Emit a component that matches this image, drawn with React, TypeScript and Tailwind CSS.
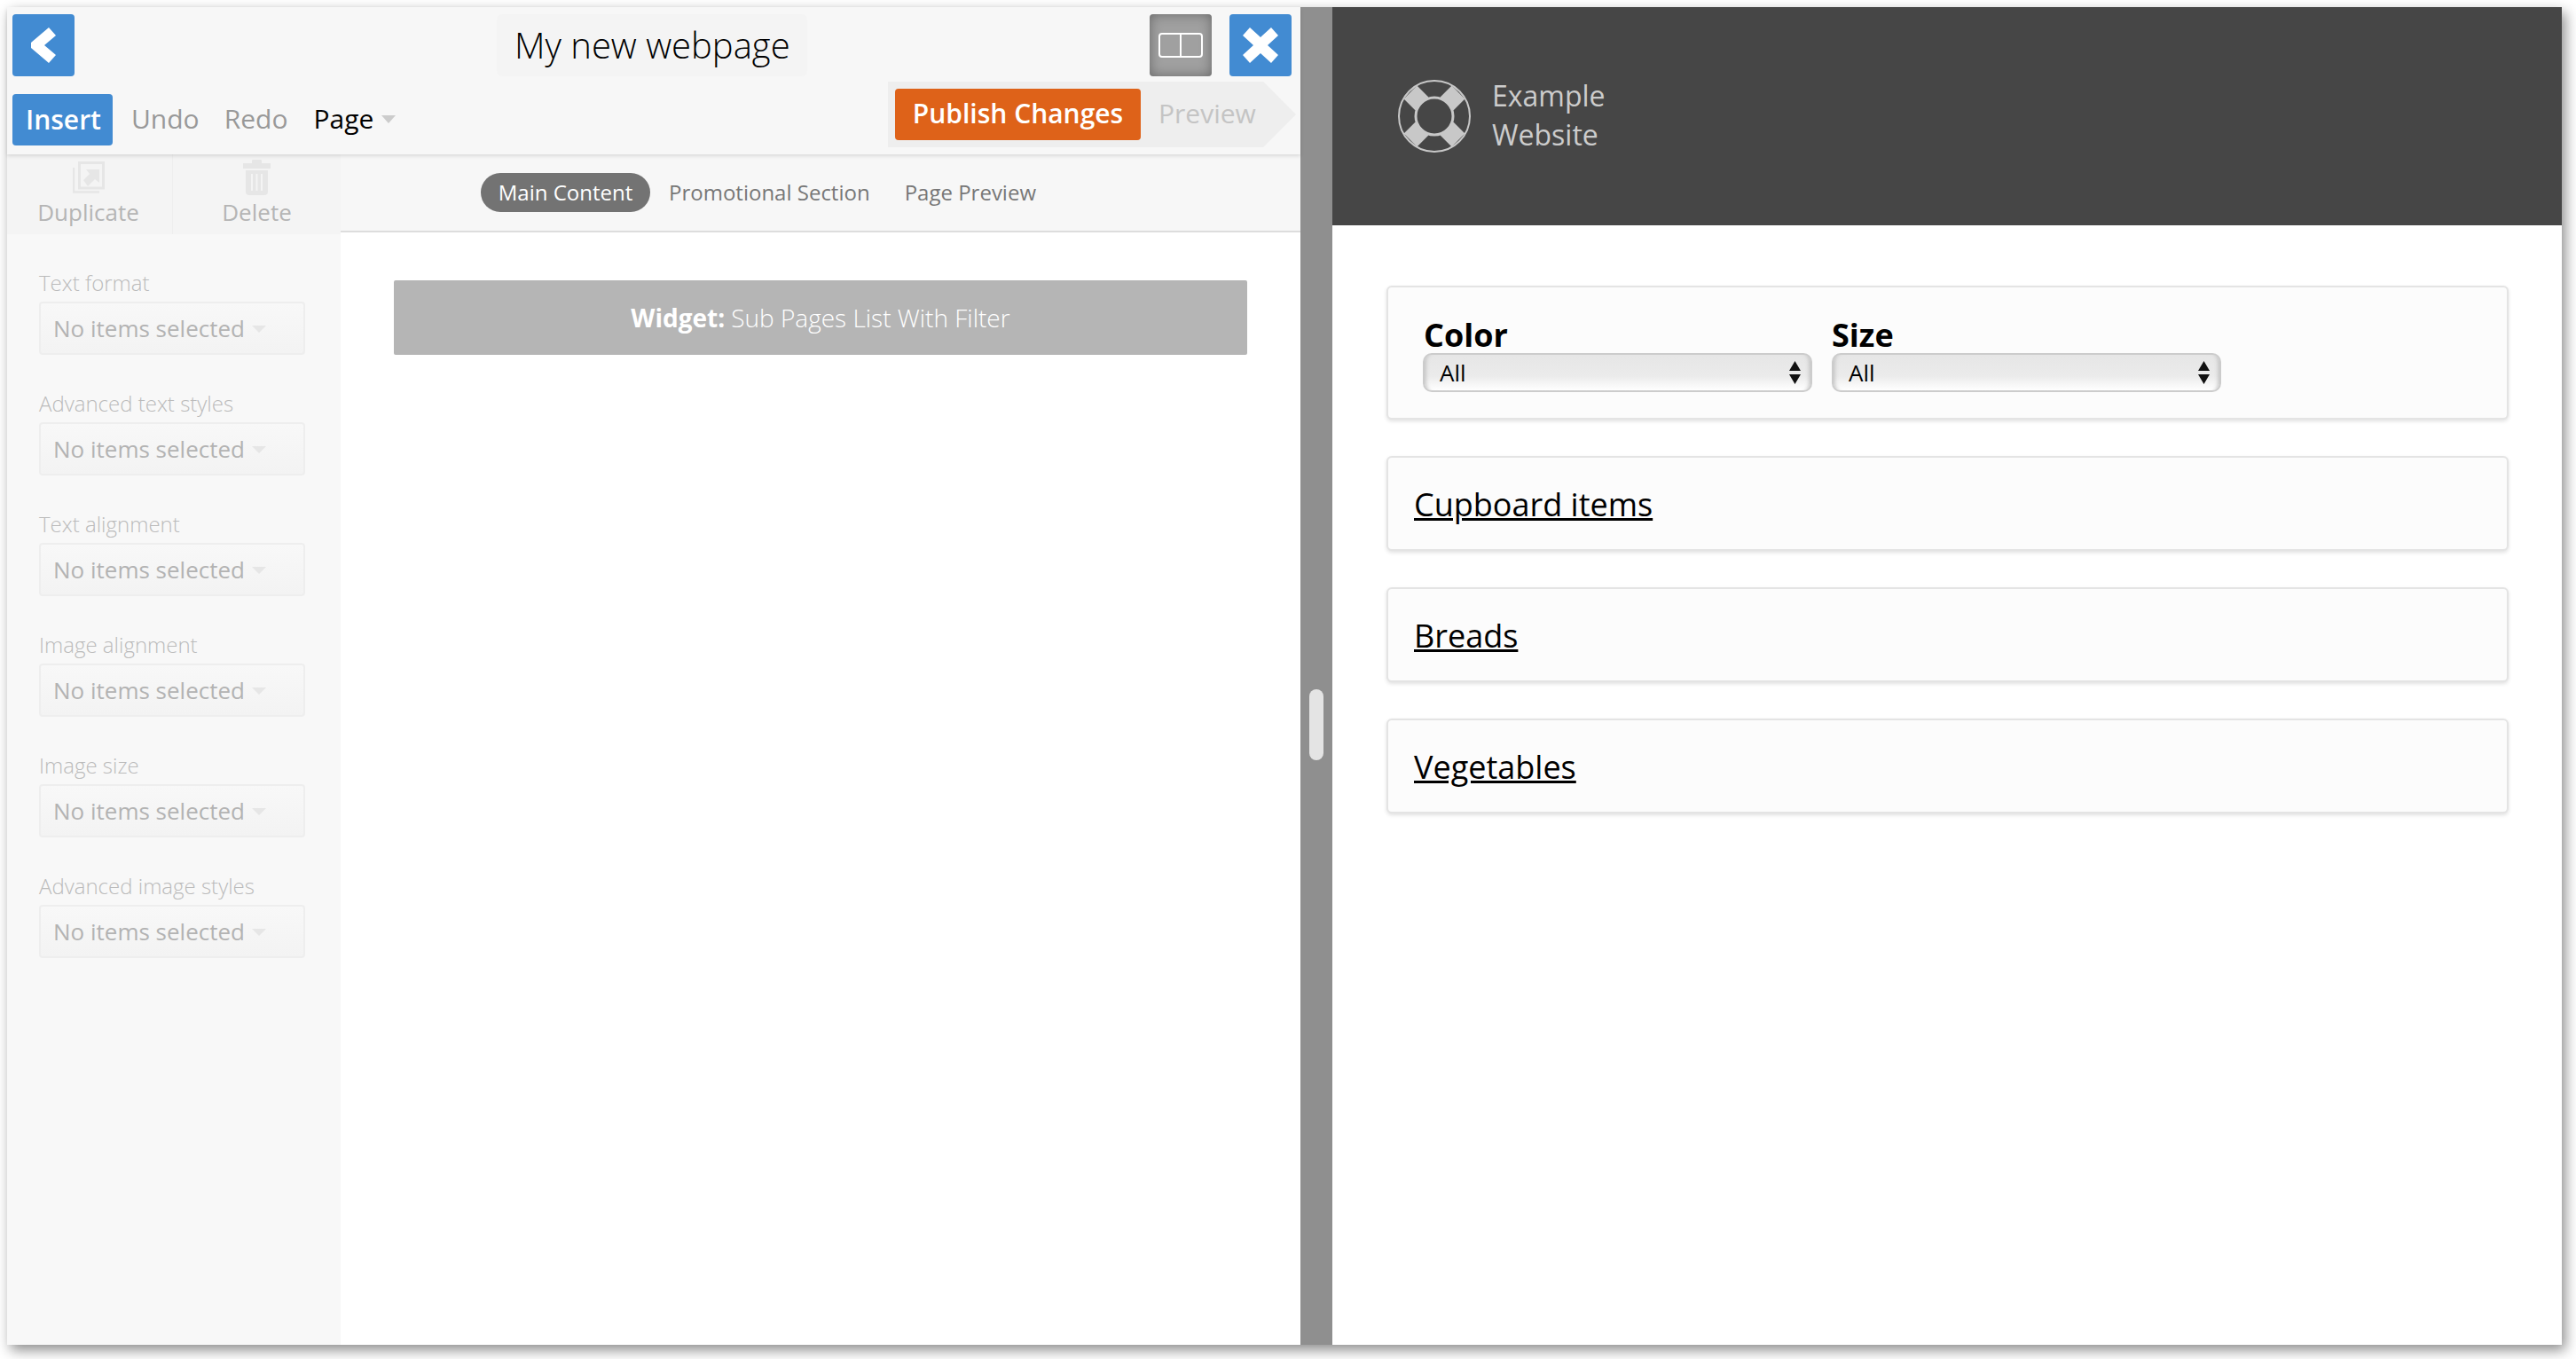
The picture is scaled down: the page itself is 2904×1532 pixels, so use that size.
import React from 'react';

const sidebarGroups = [
  'Text format',
  'Advanced text styles',
  'Text alignment',
  'Image alignment',
  'Image size',
  'Advanced image styles',
];

const pageLinks = ['Cupboard items', 'Breads', 'Vegetables'];

const SidebarGroup: React.FC<{ label: string }> = ({ label }) => (
  <div className="h-[136px]">
    <div className="h-[32px] text-[24px] leading-[32px] font-light text-[#bbb]">{label}</div>
    <div className="mt-[5px] flex h-[60px] w-[300px] items-center rounded-[4px] border-2 border-[#eee] bg-gradient-to-b from-[#f8f8f8] to-[#f3f3f3] pl-[14px]">
      <span className="text-[26px] text-[#b3b3b3]">No items selected</span>
      <span className="ml-[8px] mt-[1px] h-0 w-0 border-x-[8px] border-t-[8px] border-x-transparent border-t-[#e6e6e6]" />
    </div>
  </div>
);

const FilterSelect: React.FC<{ label: string; labelClass: string }> = ({ label, labelClass }) => (
  <div className="w-[439px]">
    <div className={`h-[40px] text-[36px] leading-[40px] font-bold text-black ${labelClass}`}>{label}</div>
    <div className="flex h-[44px] items-center justify-between rounded-[10px] border-2 border-[#ccc] bg-gradient-to-b from-[#e6e6e6] via-[#ebebeb] via-60% to-white pl-[17px] pr-[11px] shadow-[inset_6px_0_5px_-5px_#bbb,inset_-6px_0_5px_-5px_#bbb]">
      <span className="text-[26px] text-black">All</span>
      <svg width="13" height="26" viewBox="0 0 13 26">
        <path d="M6.5 0 L13 11 H0 Z M0 15 H13 L6.5 26 Z" fill="#111" />
      </svg>
    </div>
  </div>
);

export default function App() {
  return (
    <div className="h-[1532px] w-[2904px] bg-white pb-4 pl-2 pr-4 pt-2 font-['Open_Sans',sans-serif]">
      <div className="flex h-full shadow-[4px_6px_14px_rgba(0,0,0,0.45)]">
        {/* editor */}
        <div className="flex w-[1458px] flex-col bg-white">
          <div className="relative z-10 h-[166px] shrink-0 bg-[#f7f7f7] px-[6px] shadow-[0_2px_4px_rgba(0,0,0,0.12)]">
            <div className="flex h-[86px] items-start pt-2">
              <button className="flex h-[70px] w-[70px] items-center justify-center rounded-[4px] bg-[#428bd2]">
                <svg width="28" height="40" viewBox="0 0 28 40">
                  <path d="M20 0 L28 9 L15 20 L28 31 L20 40 L0 23 V17 Z" fill="white" />
                </svg>
              </button>
              <div className="ml-[476px] flex h-[70px] w-[350px] items-center rounded-[6px] bg-[#f4f4f4] pl-[20px] text-[40px] font-light text-black">
                My new webpage
              </div>
              <button className="ml-[386px] flex h-[70px] w-[70px] items-center justify-center rounded-[4px] bg-[#a0a0a0] shadow-[inset_0_0_14px_rgba(0,0,0,0.35)]">
                <svg width="50" height="28" viewBox="0 0 50 28">
                  <rect x="1" y="1" width="48" height="26" rx="3" fill="none" stroke="white" strokeWidth="2" />
                  <path d="M25 2 V26" stroke="white" strokeWidth="2" />
                </svg>
              </button>
              <button className="ml-[20px] flex h-[70px] w-[70px] items-center justify-center rounded-[4px] bg-[#428bd2]">
                <svg width="40" height="40" viewBox="0 0 40 40">
                  <path d="M8 0 L20 11 L32 0 L40 9 L28 20 L40 31 L32 40 L20 29 L8 40 L0 31 L12 20 L0 9 Z" fill="white" />
                </svg>
              </button>
            </div>
            <div className="relative flex h-[80px] items-center">
              <button className="mt-[2px] h-[58px] w-[113px] rounded-[4px] bg-[#428bd2] pb-[2px] pl-[2px] text-[30px] font-semibold text-white">Insert</button>
              <span className="ml-[21px] mt-[-1px] text-[30px] text-[#999]">Undo</span>
              <span className="ml-[28px] mt-[-1px] text-[30px] text-[#999]">Redo</span>
              <span className="ml-[29px] mt-[-1px] text-[30px] text-black">Page</span>
              <span className="ml-[9px] h-0 w-0 border-x-[8px] border-t-[9px] border-x-transparent border-t-[#ccc]" />
              <div className="absolute left-[987px] top-[-2px] flex h-[74px] w-[460px] items-center bg-[#eee] pl-[8px] [clip-path:polygon(0_0,92%_0,100%_50%,92%_100%,0_100%)]">
                <button className="h-[58px] w-[277px] rounded-[4px] bg-[#de6219] pb-[4px] text-[30px] font-semibold text-white">Publish Changes</button>
                <span className="ml-[20px] mt-[-4px] text-[30px] text-[#c4c4c4]">Preview</span>
              </div>
            </div>
          </div>

          <div className="flex flex-1">
            <div className="w-[376px] shrink-0 bg-[#f8f8f8]">
              <div className="flex h-[90px] bg-[#f4f4f4]">
                <div className="flex w-[187px] flex-col items-center border-r border-[#eee]">
                  <svg className="ml-[-2px] mt-[8px]" width="36" height="36" viewBox="0 0 36 36">
                    <path d="M7.5 1.5 H34.5 V30 H7.5 Z" fill="none" stroke="#e6e6e6" strokeWidth="3" />
                    <path d="M1 7 V34.5 H30" fill="none" stroke="#e6e6e6" strokeWidth="2.5" />
                    <path d="M12 21 L19 14 L15 9 H30 V24 L25 20 L17 28 Z" fill="#e6e6e6" />
                  </svg>
                  <span className="ml-[-3px] mt-[3px] text-[26px] leading-[36px] text-[#b5b5b5]">Duplicate</span>
                </div>
                <div className="flex w-[189px] flex-col items-center">
                  <svg className="mt-[6px]" width="31" height="40" viewBox="0 0 31 40">
                    <path d="M10 4 V1 Q10 0 11 0 H20 Q21 0 21 1 V4 H31 V10 H0 V4 Z M3 12 H28 V36 Q28 40 24 40 H7 Q3 40 3 36 Z" fill="#e6e6e6" />
                    <path d="M10 16 V35 M15.5 16 V35 M21 16 V35" stroke="#f4f4f4" strokeWidth="2" />
                  </svg>
                  <span className="mt-[1px] text-[26px] leading-[36px] text-[#b5b5b5]">Delete</span>
                </div>
              </div>
              <div className="pl-[36px] pt-[39px]">
                {sidebarGroups.map(label => (
                  <SidebarGroup key={label} label={label} />
                ))}
              </div>
            </div>

            <div className="flex-1">
              <div className="flex h-[88px] items-center border-b-2 border-[#ddd] bg-[#f7f7f7] pl-[158px] text-[24px] text-[#777]">
                <span className="flex h-[44px] w-[191px] items-center justify-center rounded-full bg-[#737373] text-white">Main Content</span>
                <span className="ml-[21px]">Promotional Section</span>
                <span className="ml-[39px]">Page Preview</span>
              </div>
              <div className="px-[60px] pt-[54px]">
                <div className="flex h-[84px] items-center justify-center rounded-[2px] bg-[#b5b5b5] text-[28px] text-white">
                  <span className="font-bold">Widget:</span>
                  <span className="ml-[7px] font-light">Sub Pages List With Filter</span>
                </div>
              </div>
            </div>
          </div>
        </div>

        {/* splitter */}
        <div className="flex w-[36px] shrink-0 items-center justify-center bg-[#8f8f8f]">
          <div className="mt-[110px] h-[80px] w-[16px] rounded-full bg-[#e4e4e4]" />
        </div>

        {/* site preview */}
        <div className="flex-1 bg-white">
          <div className="flex h-[246px] items-center bg-[#464646] pl-[74px]">
            <svg width="82" height="84" viewBox="9 8 82 84">
              <circle cx="50" cy="50" r="40" fill="none" stroke="#c8c8c8" strokeWidth="2" />
              <circle cx="50" cy="50" r="21" fill="none" stroke="#c8c8c8" strokeWidth="3" />
              <path d="M36 36 L23 23 M64 36 L77 23 M36 64 L23 77 M64 64 L77 77" fill="none" stroke="#c8c8c8" strokeWidth="21" />
            </svg>
            <div className="ml-[24px] mt-[-2px] text-[32px] leading-[44px] text-[#ccc]">
              <div>Example</div>
              <div>Website</div>
            </div>
          </div>

          <div className="pl-[61px] pr-[60px] pt-[68px]">
            <div className="mb-[1px] flex h-[151px] gap-[22px] rounded-[6px] border-2 border-[#e4e4e4] bg-[#fcfcfc] pl-[39px] pt-[34px] shadow-[0_2px_4px_rgba(0,0,0,0.12)]">
              <FilterSelect label="Color" labelClass="pl-[1px]" />
              <FilterSelect label="Size" labelClass="" />
            </div>
            {pageLinks.map(link => (
              <div
                key={link}
                className="mt-[41px] flex h-[107px] items-center rounded-[6px] border-2 border-[#e4e4e4] bg-[#fcfcfc] pl-[29px] pt-[2px] shadow-[0_2px_4px_rgba(0,0,0,0.12)]"
              >
                <a className="text-[36px] text-black underline">{link}</a>
              </div>
            ))}
          </div>
        </div>
      </div>
    </div>
  );
}
